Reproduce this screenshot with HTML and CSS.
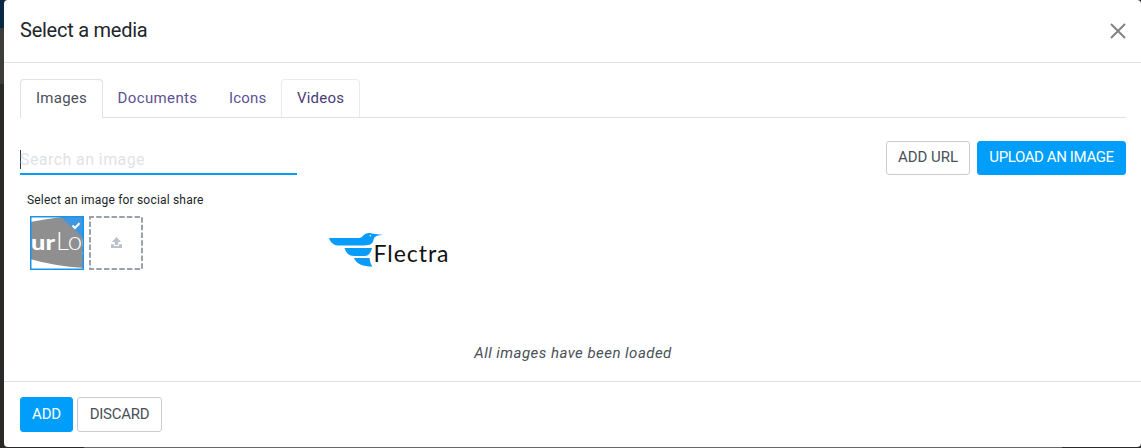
FILE: index.html
```html
<!DOCTYPE html>
<html lang="en">
<head>
<meta charset="utf-8">
<title>Select a media</title>
<link rel="stylesheet" href="styles.css">
</head>
<body>
<div class="backdrop">
  <div class="modal">
    <header class="modal-header">
      <h4 class="title">Select a media</h4>
      <button class="close" aria-label="Close"><svg width="16" height="16" viewBox="0 0 16 16"><path d="M1 1L15 15M15 1L1 15" fill="none" stroke="#808080" stroke-width="1.9"/></svg></button>
    </header>
    <main class="modal-body">
      <nav class="tabs">
        <a class="tab tab-images active"><span>Images</span></a>
        <a class="tab tab-documents"><span>Documents</span></a>
        <a class="tab tab-icons"><span>Icons</span></a>
        <a class="tab tab-videos hover"><span>Videos</span></a>
      </nav>
      <div class="toolbar">
        <div class="search"><span class="caret"></span><span class="placeholder">Search an image</span></div>
        <div class="actions">
          <button class="btn btn-light add-url">ADD URL</button>
          <button class="btn btn-primary upload">UPLOAD AN IMAGE</button>
        </div>
      </div>
      <div class="gallery">
        <section class="social">
          <p class="social-label">Select an image for social share</p>
          <div class="thumbs">
            <svg class="thumb" width="54" height="54" viewBox="0 0 54 54">
              <rect width="54" height="54" fill="#fff"/>
              <path d="M0 6Q16 3 32 1L54 0V52Q24 50 0 43Z" fill="#8f8f8f"/>
              <path d="M30 0H54V23Z" fill="#3f97e4"/>
              <path d="M42.5 9.5L45 12L49.5 7.3" fill="none" stroke="#fff" stroke-width="2"/>
              <text x="1" y="34" class="logo-bold" textLength="24" lengthAdjust="spacingAndGlyphs">ur</text>
              <text x="26" y="34" class="logo-thin" textLength="26" lengthAdjust="spacingAndGlyphs">Lo</text>
              <path d="M53 23V30M52 37L54 38" fill="none" stroke="#fff" stroke-width="1"/>
              <rect x="0.75" y="0.75" width="52.5" height="52.5" fill="none" stroke="#1994ee" stroke-width="1.5"/>
            </svg>
            <svg class="thumb" width="54" height="54" viewBox="0 0 54 54">
              <rect x="1" y="1" width="52" height="52" fill="none" stroke="#9aa1ab" stroke-width="2" stroke-dasharray="5.5 2.17" stroke-dashoffset="1.5"/>
              <path d="M27.5 21L32 26H29.2V29H25.8V26H23ZM22 28.2H24.9V30H30.1V28.2H33V32H22Z" fill="#bcc1c6"/>
            </svg>
          </div>
        </section>
        <svg class="flectra" width="122" height="38" viewBox="328 231 122 38">
          <path fill="#099cf8" d="M329 238H359C363 238 363 233 369.5 233C372 233 372.5 234 375 234L384 235C378 235.2 374 236 373.5 240C372.5 245 368 245.5 362 245.5H338C334 245.5 330 242 329 238ZM344.5 248H372C371 252 369 256 365 256H354C348 256 346 252 344.5 248ZM354 258H369.5C370 262 371 265 372.5 266.5C363 266.5 356 264 354 258Z"/>
          <circle cx="370.3" cy="235.8" r=".7" fill="#fff"/>
          <text x="373.5" y="261.5" class="flectra-name" textLength="75">Flectra</text>
        </svg>
      </div>
      <p class="loaded">All images have been loaded</p>
    </main>
    <footer class="modal-footer">
      <button class="btn btn-primary add">ADD</button>
      <button class="btn btn-light discard">DISCARD</button>
    </footer>
  </div>
</div>
</body>
</html>
```
FILE: styles.css
```css
* { box-sizing: border-box; }
body { margin: 0; font-family: Roboto, sans-serif; color: #495057; }
.backdrop {
  height: 448px;
  padding: 0 0 1px 4px;
  overflow: hidden;
  background:
    linear-gradient(#0a2845, #0a2845) 0 0 / 4px 28px no-repeat,
    linear-gradient(#3e3c39, #3e3c39) 0 28px / 4px 56px no-repeat,
    linear-gradient(90deg, #2b2927 84px, #666 84px, #666 1062px, #2b2927 1062px);
}
.modal { height: 447px; display: flex; flex-direction: column; background: #fff; border-radius: 4px; overflow: hidden; }
.modal-header { height: 63px; flex: none; display: flex; justify-content: space-between; padding: 0 15px 0 16px; border-bottom: 1px solid #dee2e6; }
.title { margin: 0; padding-top: 15px; font-size: 20px; line-height: 30px; font-weight: 400; letter-spacing: -.25px; color: #212529; }
.close { display: flex; align-items: flex-start; border: 0; padding: 22.5px 0 0; background: none; }
.modal-body { flex: 1; display: flex; flex-direction: column; padding: 16px 15px 0 16px; }
.tabs { height: 39px; flex: none; display: flex; border-bottom: 1px solid #dee2e6; }
.tab { height: 39px; padding: 0 0 0 15px; border: 1px solid transparent; border-bottom: 0; border-radius: 4px 4px 0 0; font-size: 15px; line-height: 36px; color: #5d5293; white-space: nowrap; }
.tab-images { width: 83px; letter-spacing: .25px; }
.tab-documents { width: 110px; padding-left: 13.5px; letter-spacing: .38px; }
.tab-icons { width: 68px; letter-spacing: .2px; }
.tab-videos { width: 79px; letter-spacing: .2px; }
.tab.active { border-color: #dee2e6; background: #fff; color: #495057; }
.tab.hover { height: 38px; border-color: #e9ecef; color: #483d78; }
.toolbar { height: 57px; flex: none; display: flex; justify-content: space-between; padding-top: 23px; }
.search { width: 277px; height: 34px; display: flex; align-items: flex-start; border-bottom: 2px solid #099cf8; padding-top: 9px; }
.caret { width: 1px; height: 19px; margin-right: -1px; background: #343a40; }
.placeholder { color: #dfe3e7; font-size: 16px; line-height: 19px; letter-spacing: .42px; }
.actions { display: flex; gap: 7px; }
.btn { height: 34px; border-radius: 3px; border: 1px solid; padding: 0 0 2px; font: 400 15px/30px Roboto, sans-serif; white-space: nowrap; }
.btn-light { background: #fff; border-color: #c9cccf; color: #495057; }
.btn-primary { background: #009efb; border-color: #009efb; color: #fff; }
.add-url { width: 84px; letter-spacing: -.05px; }
.upload { width: 149px; letter-spacing: -.4px; }
.gallery { display: flex; gap: 184px; padding: 17px 0 0 7px; height: 154px; flex: none; }
.social { width: 117px; }
.social-label { margin: 0; font-size: 12px; line-height: 17px; letter-spacing: .19px; white-space: nowrap; color: #212529; }
.thumbs { display: flex; gap: 5px; padding: 7px 0 0 3px; }
.thumb { flex: none; }
.logo-bold { font: 900 21px Lato, sans-serif; fill: #fff; }
.logo-thin { font: 300 25px Lato, sans-serif; fill: #fff; }
.flectra { flex: none; margin-top: 39px; }
.flectra-name { font: 400 23px Lato, sans-serif; fill: #111; }
.loaded { margin: 0; padding-top: 14px; text-align: center; font-style: italic; font-size: 15px; line-height: 20px; letter-spacing: .47px; }
.modal-footer { height: 66px; flex: none; display: flex; gap: 4px; padding: 15px 16px; border-top: 1px solid #dee2e6; }
.modal-footer .btn { height: 35px; }
.add { width: 53px; letter-spacing: -.2px; }
.discard { width: 85px; letter-spacing: -.25px; }
```
